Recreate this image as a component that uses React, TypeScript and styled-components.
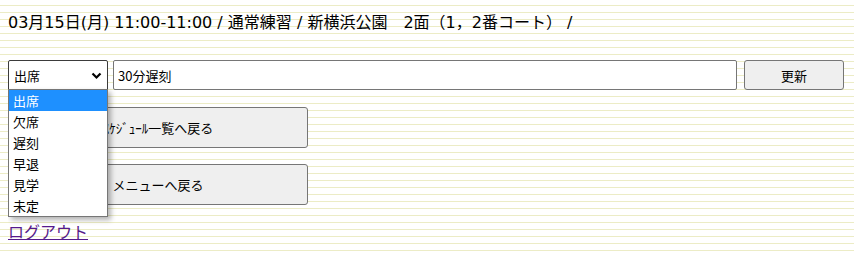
import React from 'react';
import styled, {createGlobalStyle} from 'styled-components';

const GlobalStyle = createGlobalStyle`
  html {
    background-color: #fff;
    background-image: repeating-linear-gradient(
      to bottom,
      transparent 0,
      transparent 5px,
      #ececc6 5px,
      #ececc6 6px,
      transparent 6px,
      transparent 7px
    );
  }
  body {
    margin: 8px;
    font-family: 'Noto Sans CJK JP', 'Noto Sans', sans-serif;
    color: #000;
  }
`;

const options = ['出席', '欠席', '遅刻', '早退', '見学', '未定'];

export default function App() {
  return (
    <>
      <GlobalStyle />
      <Page>
        <Title>
          03月15日(月) 11:00-11:00 / 通常練習 / 新横浜公園　2面（1，2番コート） /
        </Title>
        <FormRow>
          <SelectWrap>
            <SelectBox>
              <span>出席</span>
              <svg width="11" height="8" viewBox="0 0 11 8">
                <path d="M1.5 1.5 L5.5 5.5 L9.5 1.5" fill="none" stroke="#000" strokeWidth="2.2" />
              </svg>
            </SelectBox>
            <ListBox>
              {options.map((o, i) => (
                <Option key={o} $active={i === 0}>
                  {o}
                </Option>
              ))}
            </ListBox>
          </SelectWrap>
          <TextInput defaultValue="30分遅刻" />
          <SmallButton>更新</SmallButton>
        </FormRow>
        <NavButton>ｽｹｼﾞｭｰﾙ一覧へ戻る</NavButton>
        <NavButton>メニューへ戻る</NavButton>
        <LogoutLink href="#">ログアウト</LogoutLink>
      </Page>
    </>
  );
}

const Page = styled.div`
  display: flex;
  flex-direction: column;
  align-items: flex-start;
`;

const Title = styled.div`
  margin-top: 3px;
  font-family: 'DejaVu Sans', 'Noto Sans CJK JP', sans-serif;
  font-size: 16px;
  line-height: 24px;
  white-space: nowrap;
`;

const FormRow = styled.div`
  display: flex;
  align-items: stretch;
  gap: 5px;
  margin-top: 25px;
  width: 836px;
  height: 30px;
`;

const SelectWrap = styled.div`
  position: relative;
  width: 100px;
  flex-shrink: 0;
`;

const SelectBox = styled.div`
  box-sizing: border-box;
  height: 100%;
  display: flex;
  align-items: center;
  justify-content: space-between;
  padding: 0 5px 0 5px;
  border: 1px solid #3b3b3b;
  border-radius: 2px 2px 0 0;
  background: #fff;
  font-size: 13px;
  svg {
    margin-top: 1px;
  }
`;

const ListBox = styled.div`
  position: absolute;
  top: 29px;
  left: 0;
  width: 100px;
  box-sizing: border-box;
  border: 1px solid #767676;
  background: #fff;
  box-shadow: 3px 3px 5px rgba(0, 0, 0, 0.3);
  z-index: 10;
`;

const Option = styled.div<{$active: boolean}>`
  height: 21px;
  line-height: 21px;
  padding-left: 4px;
  font-size: 13px;
  background: ${(p) => (p.$active ? '#1e90ff' : '#fff')};
  color: ${(p) => (p.$active ? '#fff' : '#000')};
`;

const TextInput = styled.input`
  flex: 1;
  box-sizing: border-box;
  height: 100%;
  border: 1px solid #767676;
  border-radius: 2px;
  padding: 0 4px;
  font-family: 'Noto Sans CJK JP', sans-serif;
  font-size: 13px;
  color: #000;
  background: #fff;
`;

const SmallButton = styled.button`
  box-sizing: border-box;
  width: 100px;
  height: 100%;
  margin-left: 2px;
  border: 1px solid #767676;
  border-radius: 3px;
  background: #efefef;
  font-family: 'Noto Sans CJK JP', sans-serif;
  font-size: 13px;
  color: #000;
`;

const NavButton = styled.button`
  box-sizing: border-box;
  width: 300px;
  height: 41px;
  margin-top: 17px;
  border: 1px solid #767676;
  border-radius: 3px;
  background: #efefef;
  font-family: 'Noto Sans CJK JP', sans-serif;
  font-size: 13px;
  color: #000;
  & + & {
    margin-top: 16px;
  }
`;

const LogoutLink = styled.a`
  margin-top: 14px;
  font-size: 16px;
  line-height: 24px;
  color: #551a8b;
`;
